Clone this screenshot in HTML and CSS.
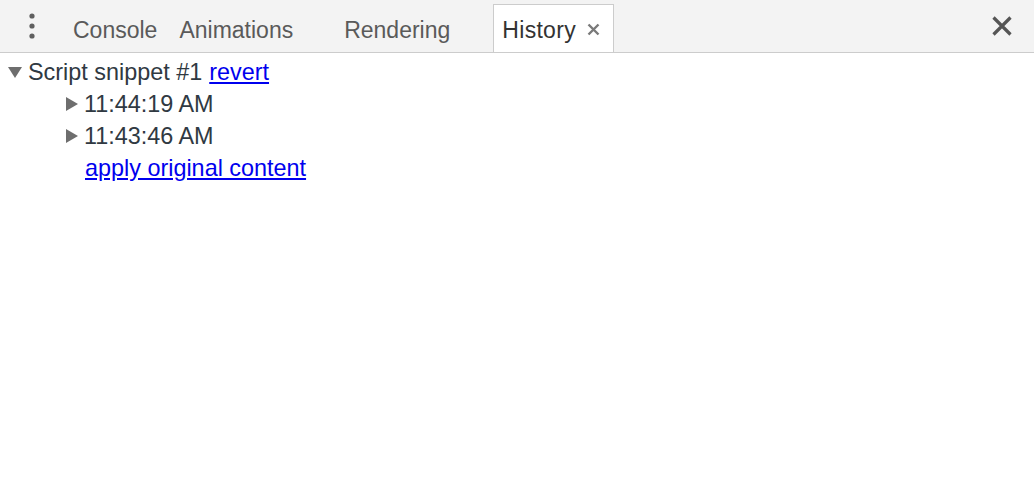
FILE: index.html
```html
<!DOCTYPE html>
<html>
<head>
<meta charset="utf-8">
<link rel="stylesheet" href="styles.css">
</head>
<body>
<div class="toolbar">
  <div class="menu">
    <svg width="6" height="26" viewBox="0 0 6 26"><circle cx="3" cy="3" r="2.6" fill="#5f5f5f"/><circle cx="3" cy="13" r="2.6" fill="#5f5f5f"/><circle cx="3" cy="23" r="2.6" fill="#5f5f5f"/></svg>
  </div>
  <div class="tabs">
    <div class="tab tab-console">Console</div>
    <div class="tab tab-animations">Animations</div>
    <div class="tab tab-rendering">Rendering</div>
    <div class="tab tab-history selected">History
      <svg class="tab-close" width="13" height="13" viewBox="0 0 13 13"><path d="M1.5 1.5 L11.5 11.5 M11.5 1.5 L1.5 11.5" stroke="#7a7a7a" stroke-width="2.4"/></svg>
    </div>
  </div>
  <div class="close">
    <svg width="20" height="20" viewBox="0 0 20 20"><path d="M1.5 1.5 L18.5 18.5 M18.5 1.5 L1.5 18.5" stroke="#555" stroke-width="3.2"/></svg>
  </div>
</div>
<div class="tree">
  <div class="row">
    <svg class="arrow" width="14" height="11" viewBox="0 0 14 11"><path d="M0 0 H14 L7 11 Z" fill="#6e6e6e"/></svg>
    <span class="label">Script snippet #1</span><a class="link revert" href="#">revert</a>
  </div>
  <div class="children">
    <div class="row">
      <svg class="arrow" width="12" height="14" viewBox="0 0 12 14"><path d="M0 0 V14 L12 7 Z" fill="#6e6e6e"/></svg>
      <span class="label">11:44:19 AM</span>
    </div>
    <div class="row">
      <svg class="arrow" width="12" height="14" viewBox="0 0 12 14"><path d="M0 0 V14 L12 7 Z" fill="#6e6e6e"/></svg>
      <span class="label">11:43:46 AM</span>
    </div>
    <div class="row leaf">
      <a class="link" href="#">apply original content</a>
    </div>
  </div>
</div>
</body>
</html>
```
FILE: styles.css
```css
html, body {
  margin: 0;
  padding: 0;
  background: #ffffff;
  font-family: "Liberation Sans", Arial, sans-serif;
}

.toolbar {
  display: flex;
  align-items: stretch;
  height: 52px;
  background: #f3f3f3;
  border-bottom: 1px solid #cccccc;
}

.menu {
  width: 65px;
  display: flex;
  align-items: center;
  justify-content: center;
  box-sizing: border-box;
  padding-right: 1px;
}

.tabs {
  display: flex;
  align-items: stretch;
  flex: 1;
  padding-top: 4px;
}

.tab {
  display: flex;
  align-items: center;
  padding: 3px 7px 0;
  font-size: 23px;
  color: #5a5a5a;
  border: 1px solid transparent;
  border-bottom: none;
  white-space: nowrap;
}

.tab-animations {
  margin-left: 6px;
}

.tab-rendering {
  margin-left: 35px;
}

.tab-history {
  margin-left: 35px;
}

.tab.selected {
  background: #ffffff;
  border-color: #cccccc;
  color: #333333;
  padding: 3px 13px 0 8px;
  gap: 11px;
  letter-spacing: 0.3px;
}

.tab-close {
  margin-top: -1px;
}

.close {
  display: flex;
  align-items: center;
  padding-right: 22px;
}

.tree {
  padding: 3px 0 0 8px;
  font-size: 23.4px;
  color: #303942;
}

.row {
  display: flex;
  align-items: center;
  height: 32px;
  white-space: pre;
}

.arrow {
  margin-right: 6px;
  flex: none;
}

.revert {
  margin-left: 7px;
}

.children {
  padding-left: 58px;
}

.row.leaf {
  padding-left: 19px;
}

.link {
  color: #0000ee;
  text-decoration: underline;
}
```
